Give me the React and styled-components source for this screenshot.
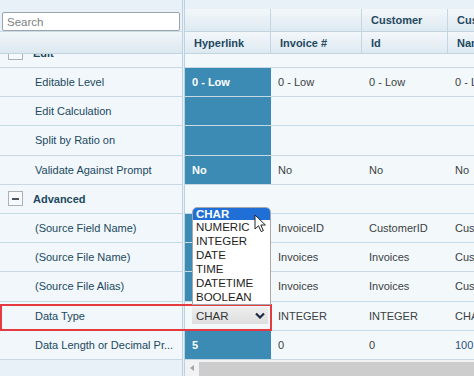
import React from 'react';
import styled, { createGlobalStyle, css } from 'styled-components';

const Global = createGlobalStyle`
  html, body { margin: 0; padding: 0; }
  body {
    background: #e8f1f7;
    font-family: "Liberation Sans", Arial, sans-serif;
    font-size: 11px;
    overflow: hidden;
  }
`;

const ROW_H = 29.2;

const Frame = styled.div`
  position: relative;
  width: 474px;
  height: 376px;
  overflow: hidden;
  display: grid;
  grid-template-columns: 183px 1fr;
  background: #e8f1f7;
`;

const LeftPane = styled.div`
  border-right: 1px solid #bdd2df;
  display: flex;
  flex-direction: column;
  overflow: hidden;
`;

const SearchBar = styled.div`
  height: 31px;
  box-sizing: border-box;
  padding: 12px 0 0 2px;
`;

const SearchInput = styled.input`
  width: 178px;
  height: 19px;
  box-sizing: border-box;
  border: 1px solid #9ba4aa;
  border-radius: 2px;
  padding: 0 4px;
  font: 11.5px "Liberation Sans", Arial, sans-serif;
  color: #333;
  background: #fff;
  outline: none;
  &::placeholder { color: #7b7f82; }
`;

const HeaderBand = styled.div`
  height: 23px;
  box-sizing: border-box;
  background: linear-gradient(#f1f6f9, #dce8f0);
  border-top: 1px solid #cbdbe5;
  border-bottom: 1px solid #c2d5e1;
`;

const Body = styled.div`
  flex: 1;
  overflow: hidden;
`;

const Scrolled = styled.div`
  margin-top: -15.2px;
`;

const LeftRow = styled.div`
  height: ${ROW_H}px;
  box-sizing: border-box;
  border-bottom: 1px solid #c6d9e5;
  background: #f1f7fb;
  display: flex;
  align-items: center;
  gap: 10px;
  padding-left: ${p => (p.$group ? 8 : 35)}px;
  color: #22495e;
  font-weight: ${p => (p.$group ? 700 : 400)};
  white-space: nowrap;
  overflow: hidden;
`;

const Toggle = styled.span`
  width: 15px;
  height: 15px;
  box-sizing: border-box;
  border: 1px solid #a9b2b8;
  background: #f7f9fa;
  display: flex;
  align-items: center;
  justify-content: center;
  &::after {
    content: "";
    width: 7px;
    height: 2px;
    background: #4a5560;
  }
`;

const RightPane = styled.div`
  padding-left: 1px;
  display: flex;
  overflow: hidden;
`;

const RightInner = styled.div`
  flex: 1;
  border-left: 1px solid #bdd2df;
  display: flex;
  flex-direction: column;
  overflow: hidden;
  padding-top: 9px;
`;

const COLS = '86px 91px 86px 100px';

const HeadRow = styled.div`
  display: grid;
  grid-template-columns: ${COLS};
  height: ${p => p.$h}px;
  box-sizing: border-box;
  border-bottom: 1px solid #c2d5e1;
`;

const HeadCell = styled.div`
  background: linear-gradient(#f3f7fa, #dde9f1);
  border-right: 1px solid #c4d6e2;
  display: flex;
  align-items: center;
  padding-left: 9px;
  color: #244860;
  font-weight: 700;
  font-size: 11px;
  white-space: nowrap;
  overflow: hidden;
`;

const Row = styled.div`
  display: grid;
  grid-template-columns: ${COLS};
  height: ${ROW_H}px;
  box-sizing: border-box;
  border-bottom: 1px solid #c6d9e5;
  background: #f3f8fb;
`;

const Cell = styled.div`
  position: relative;
  display: flex;
  align-items: center;
  padding-left: 7px;
  color: #3b3f42;
  white-space: nowrap;
  overflow: ${p => (p.$open ? 'visible' : 'hidden')};
  ${p => p.$hl && css`
    background: #3b8bb4;
    color: #fff;
    font-weight: 700;
  `}
  ${p => p.$link && css`color: #2d4f7e;`}
`;

const SelectBox = styled.div`
  position: relative;
  width: 76px;
  height: 17px;
  box-sizing: border-box;
  background: linear-gradient(#eeeeee, #dedede);
  display: flex;
  align-items: center;
  justify-content: space-between;
  padding: 0 3px 0 4px;
  color: #333;
  font-size: 11.5px;
`;

const List = styled.div`
  position: absolute;
  left: 0;
  bottom: calc(100% + 2px);
  width: 79px;
  box-sizing: border-box;
  background: #fff;
  border: 1px solid #a8a8a8;
  border-radius: 5px 5px 0 0;
  display: flex;
  flex-direction: column;
  z-index: 5;
`;

const Option = styled.div`
  padding-left: 3px;
  line-height: 14px;
  font-size: 11.5px;
  color: #1e1e1e;
  ${p => p.$active && css`
    line-height: 12px;
    background: #1f6fd6;
    color: #fff;
    font-weight: 700;
    border-radius: 4px 4px 0 0;
  `}
`;

const Cursor = styled.svg`
  position: absolute;
  left: 61px;
  top: 6px;
  width: 13px;
  height: 19px;
`;

const ScrollBar = styled.div`
  height: 16px;
  display: flex;
  align-items: stretch;
  background: #f0f2f3;
`;

const ScrollArrow = styled.div`
  width: 14px;
  display: flex;
  align-items: center;
  justify-content: center;
  &::after {
    content: "";
    border-style: solid;
    border-width: 3px 4px 3px 0;
    border-color: transparent #a3a3a3 transparent transparent;
  }
`;

const ScrollThumb = styled.div`
  flex: 1;
  margin-top: 2px;
  background: #cdcdcd;
`;

const Highlight = styled.div`
  position: absolute;
  left: 0;
  top: 304px;
  width: 272px;
  height: 27px;
  box-sizing: border-box;
  border: 2px solid #e53a3f;
  pointer-events: none;
  z-index: 4;
`;

const leftRows = [
  { label: 'Edit', group: true },
  { label: 'Editable Level' },
  { label: 'Edit Calculation' },
  { label: 'Split by Ratio on' },
  { label: 'Validate Against Prompt' },
  { label: 'Advanced', group: true },
  { label: '(Source Field Name)' },
  { label: '(Source File Name)' },
  { label: '(Source File Alias)' },
  { label: 'Data Type' },
  { label: 'Data Length or Decimal Pr...' },
];

const rightRows = [
  { group: true, cells: ['', '', '', ''] },
  { cells: ['0 - Low', '0 - Low', '0 - Low', '0 - Low'] },
  { cells: ['', '', '', ''] },
  { cells: ['', '', '', ''] },
  { cells: ['No', 'No', 'No', 'No'] },
  { group: true, cells: ['', '', '', ''] },
  { cells: ['', 'InvoiceID', 'CustomerID', 'CustomerName'] },
  { cells: ['', 'Invoices', 'Invoices', 'Customers'] },
  { cells: ['', 'Invoices', 'Invoices', 'Customers'] },
  { select: true, cells: ['CHAR', 'INTEGER', 'INTEGER', 'CHAR'] },
  { cells: ['5', '0', '0', '100'] },
];

const options = ['CHAR', 'NUMERIC', 'INTEGER', 'DATE', 'TIME', 'DATETIME', 'BOOLEAN'];

const Chevron = () => (
  <svg width="10" height="7" viewBox="0 0 10 7">
    <path d="M1 1.5 L5 5.5 L9 1.5" fill="none" stroke="#1c2a45" strokeWidth="2.2" />
  </svg>
);

function DataTypeSelect() {
  return (
    <SelectBox>
      <span>CHAR</span>
      <Chevron />
      <List>
        {options.map((o, i) => (
          <Option key={o} $active={i === 0}>{o}</Option>
        ))}
        <Cursor viewBox="0 0 13 19">
          <path d="M1 1 L1 15 L4.5 11.8 L7.2 17.6 L9.4 16.6 L6.8 11 L11.4 11 Z"
            fill="#fff" stroke="#222" strokeWidth="1" strokeLinejoin="round" />
        </Cursor>
      </List>
    </SelectBox>
  );
}

export default function App() {
  return (
    <>
      <Global />
      <Frame>
        <LeftPane>
          <SearchBar>
            <SearchInput placeholder="Search" />
          </SearchBar>
          <HeaderBand />
          <Body>
            <Scrolled>
              {leftRows.map((r, i) => (
                <LeftRow key={i} $group={r.group}>
                  {r.group && <Toggle />}
                  {r.label}
                </LeftRow>
              ))}
            </Scrolled>
          </Body>
        </LeftPane>
        <RightPane>
          <RightInner>
            <HeadRow $h={23}>
              <HeadCell />
              <HeadCell />
              <HeadCell>Customer</HeadCell>
              <HeadCell>Customer</HeadCell>
            </HeadRow>
            <HeadRow $h={22}>
              <HeadCell>Hyperlink</HeadCell>
              <HeadCell>Invoice #</HeadCell>
              <HeadCell>Id</HeadCell>
              <HeadCell>Name</HeadCell>
            </HeadRow>
            <Body>
              <Scrolled>
                {rightRows.map((r, i) => (
                  <Row key={i}>
                    {r.cells.map((c, j) => {
                      if (j === 0 && r.select) {
                        return (
                          <Cell key={j} $open>
                            <DataTypeSelect />
                          </Cell>
                        );
                      }
                      return (
                        <Cell key={j} $hl={j === 0 && !r.group} $link={j === 3 && c === '100'}>
                          {c}
                        </Cell>
                      );
                    })}
                  </Row>
                ))}
              </Scrolled>
            </Body>
            <ScrollBar>
              <ScrollArrow />
              <ScrollThumb />
            </ScrollBar>
          </RightInner>
        </RightPane>
        <Highlight />
      </Frame>
    </>
  );
}
